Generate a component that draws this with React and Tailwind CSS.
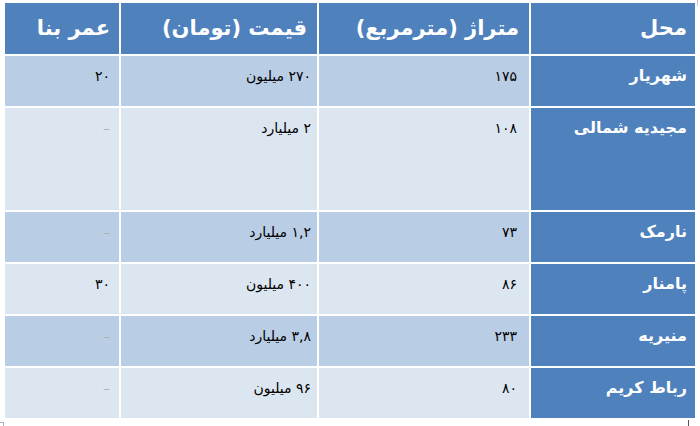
const rows = [
  { place: "شهریار", area: "۱۷۵", price: "۲۷۰ میلیون", age: "۲۰" },
  { place: "مجیدیه شمالی", area: "۱۰۸", price: "۲ میلیارد", age: null },
  { place: "نارمک", area: "۷۳", price: "۱,۲ میلیارد", age: null },
  { place: "پامنار", area: "۸۶", price: "۴۰۰ میلیون", age: "۳۰" },
  { place: "منیریه", area: "۲۳۳", price: "۳,۸ میلیارد", age: null },
  { place: "رباط کریم", area: "۸۰", price: "۹۶ میلیون", age: null },
];

const headers = [
  { label: "محل", pad: "pr-[8px]" },
  { label: "متراژ (مترمربع)", pad: "pr-[10px]" },
  { label: "قیمت (تومان)", pad: "pr-[10px]" },
  { label: "عمر بنا", pad: "pr-[9px]" },
];

const App = () => {
  return (
    <div
      className="relative w-[700px] h-[426px] bg-white overflow-hidden pt-[3px] pl-[5px]"
      style={{ fontFamily: "'DejaVu Sans', 'Noto Sans', sans-serif" }}
    >
      <div
        dir="rtl"
        className="w-[690px] grid grid-cols-[164px_210px_196px_114px] grid-rows-[51px_50px_102px_50px_50px_50px_50px] gap-[2px] bg-white"
      >
        {headers.map((h) => (
          <div
            key={h.label}
            className={`bg-[#4f81bd] text-white font-bold text-[21px] flex items-center ${h.pad}`}
          >
            {h.label}
          </div>
        ))}

        {rows.map((r, i) => {
          const band = i % 2 === 0 ? "bg-[#b9cde5]" : "bg-[#dce6f1]";
          return (
            <div key={r.place} className="contents">
              <div className="bg-[#4f81bd] text-white font-bold text-[16px] leading-[22px] pt-[9px] pr-[8px]">
                {r.place}
              </div>
              <div className={`${band} text-black text-[14px] leading-[22px] pt-[9px] pr-[12px]`}>
                {r.area}
              </div>
              <div className={`${band} text-black text-[14px] leading-[22px] pt-[9px] pr-[6px]`}>
                {r.price}
              </div>
              <div className={`${band} text-[14px] leading-[22px] pt-[9px] pr-[9px]`}>
                {r.age ? (
                  <span className="text-black">{r.age}</span>
                ) : (
                  <span className="text-[#b0b0b0]">–</span>
                )}
              </div>
            </div>
          );
        })}
      </div>

      {/* selection handle marks from the source document */}
      <div className="absolute right-[2px] top-0 w-[1px] h-[6px] bg-[#c8c8c8]" />
      <div className="absolute left-0 bottom-0 w-[4px] h-[4px] border-t border-r border-[#b0b0b0]" />
      <div className="absolute right-[11px] bottom-0 w-[1px] h-[6px] bg-[#555]" />
    </div>
  );
};

export default App;
